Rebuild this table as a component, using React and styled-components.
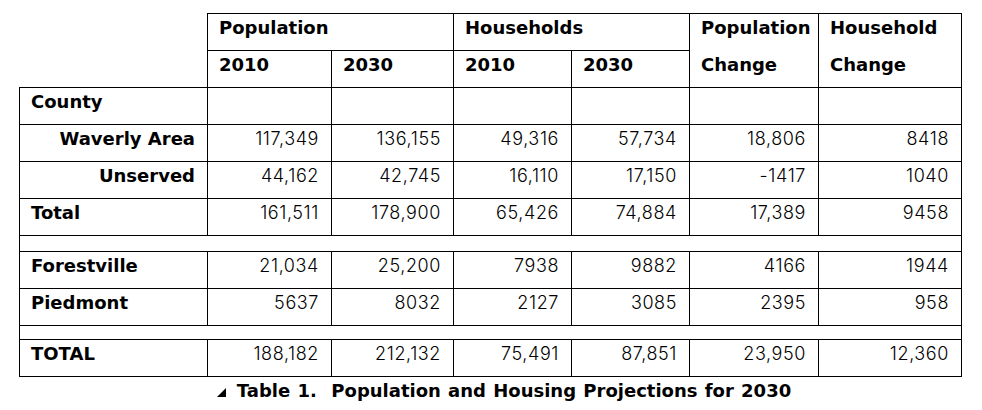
import React from "react";
import styled, { createGlobalStyle } from "styled-components";

const Global = createGlobalStyle`
  html, body { margin: 0; padding: 0; background: #fff; }
  body { font-family: Inter, "Noto Sans", sans-serif; color: #000; }
`;

const Page = styled.div`
  padding: 13px 0 0 19px;
  width: 942px;
`;

const Table = styled.table`
  border-collapse: collapse;
  table-layout: fixed;
  width: 942px;
  font-size: 18px;
`;

const Cell = styled.td`
  border: 1px solid #000;
  height: 37px;
  padding: 2px 12px 0 11px;
  vertical-align: top;
  line-height: 24px;
  text-align: ${(p) => p.$align || "left"};
  font-family: ${(p) =>
    p.$bold ? '"DejaVu Sans", sans-serif' : 'Inter, "Noto Sans", sans-serif'};
  font-weight: ${(p) => (p.$bold ? 700 : 300)};
  letter-spacing: ${(p) => (p.$bold ? "0" : "0.6px")};
  white-space: nowrap;
  box-sizing: border-box;
`;

const Blank = styled.td`
  border: none;
  padding: 0;
`;

const Spacer = styled.td`
  border: 1px solid #000;
  height: ${(p) => p.$h}px;
  padding: 0;
  box-sizing: border-box;
`;

const Stack = styled.div`
  display: flex;
  flex-direction: column;
  gap: 13px;
`;

const Caption = styled.div`
  display: flex;
  align-items: center;
  justify-content: center;
  padding-left: 28px;
  margin-top: 2px;
  font-family: "DejaVu Sans", sans-serif;
  font-weight: 700;
  font-size: 18px;
  word-spacing: 1px;
  line-height: 24px;
`;

const Tri = styled.svg`
  width: 9px;
  height: 9px;
  margin-right: 11px;
  margin-top: 2px;
`;

const cols = [188, 124, 122, 118, 118, 129, 143];

const rows = [
  { label: "Waverly Area", align: "right", v: ["117,349", "136,155", "49,316", "57,734", "18,806", "8418"] },
  { label: "Unserved", align: "right", v: ["44,162", "42,745", "16,110", "17,150", "-1417", "1040"] },
  { label: "Total", v: ["161,511", "178,900", "65,426", "74,884", "17,389", "9458"] },
  { spacer: 16 },
  { label: "Forestville", v: ["21,034", "25,200", "7938", "9882", "4166", "1944"] },
  { label: "Piedmont", v: ["5637", "8032", "2127", "3085", "2395", "958"] },
  { spacer: 14 },
  { label: "TOTAL", v: ["188,182", "212,132", "75,491", "87,851", "23,950", "12,360"] },
];

export default function App() {
  return (
    <Page>
      <Global />
      <Table>
        <colgroup>
          {cols.map((w, i) => (
            <col key={i} style={{ width: w }} />
          ))}
        </colgroup>
        <tbody>
          <tr>
            <Blank rowSpan={2} />
            <Cell $bold colSpan={2}>Population</Cell>
            <Cell $bold colSpan={2}>Households</Cell>
            <Cell $bold rowSpan={2}>
              <Stack>
                <span>Population</span>
                <span>Change</span>
              </Stack>
            </Cell>
            <Cell $bold rowSpan={2}>
              <Stack>
                <span>Household</span>
                <span>Change</span>
              </Stack>
            </Cell>
          </tr>
          <tr>
            <Cell $bold>2010</Cell>
            <Cell $bold>2030</Cell>
            <Cell $bold>2010</Cell>
            <Cell $bold>2030</Cell>
          </tr>
          <tr>
            <Cell $bold>County</Cell>
            {[0, 1, 2, 3, 4, 5].map((i) => (
              <Cell key={i} />
            ))}
          </tr>
          {rows.map((r, i) =>
            r.spacer ? (
              <tr key={i}>
                <Spacer colSpan={7} $h={r.spacer} />
              </tr>
            ) : (
              <tr key={i}>
                <Cell $bold $align={r.align}>{r.label}</Cell>
                {r.v.map((v, j) => (
                  <Cell key={j} $align="right">{v}</Cell>
                ))}
              </tr>
            )
          )}
        </tbody>
      </Table>
      <Caption>
        <Tri viewBox="0 0 9 9">
          <polygon points="9,0 9,9 0,9" fill="#000" />
        </Tri>
        <span>Table 1.&nbsp; Population and Housing Projections for 2030</span>
      </Caption>
    </Page>
  );
}
